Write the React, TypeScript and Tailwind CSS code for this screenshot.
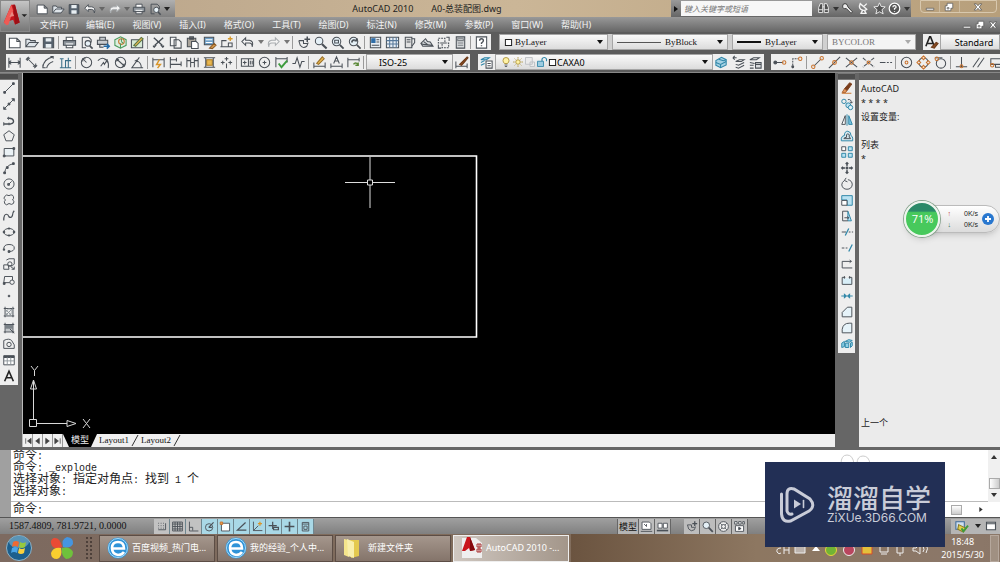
import type { ReactNode } from "react";

const CJK = "font-['Noto_Sans','Noto_Sans_CJK_SC',sans-serif]";
const SERIF = "font-['Liberation_Serif','Noto_Sans_CJK_SC',serif]";

const dk = "#4a5057";
const bl = "#2f86a8";
const or = "#c9722c";

// all drawings live on a 16 x 16 grid
const art: Record<string, ReactNode> = {
    new: <path d="M2.500 3.500h8l3.500 3.500v6.500h-11.500zM10.500 3.500v3.500H14" fill="#fff" />,
    open: <path d="M2 12.500V4.500h4l1 1.500h5v2M2 12.500l3.500-4.500H15l-3.500 4.500z" fill="#dfe5ea" />,
    save: (
        <>
            <path d="M2.500 3h11v10.500h-11z" fill="#56626e" />
            <path d="M5 3.500h6v3.500H5zM5 9.500h6v4H5z" fill="#e8eef2" stroke="none" />
        </>
    ),
    print: (
        <>
            <path d="M4.500 6V2.500h7V6M4.500 10.500v3h7v-3" fill="#fff" />
            <path d="M1.500 6h13v5h-13z" fill="#8d949b" />
            <path d="M4 9.500h8" stroke="#fff" />
        </>
    ),
    preview: (
        <>
            <path d="M3.500 2.500h7l2.500 2.500v3M3.500 2.500v11h4" />
            <circle cx="9.500" cy="9" r="3" fill="#e8f2f8" />
            <path d="M11.500 11.500l3 3" strokeWidth="1.800" />
        </>
    ),
    publish: (
        <>
            <path d="M4 5V2.500h6V5M1.500 5.500h11v4.500h-11zM4 10v3h4" fill="#c8ccd0" />
            <path d="M8 12h6M11.500 9.500L14 12l-2.500 2.500" stroke="#236ba8" strokeWidth="1.800" />
        </>
    ),
    dwf: (
        <>
            <path d="M2 5l6-3 6 3v6l-6 3-6-3z" fill="#dcefe0" stroke="#4b9a5d" />
            <circle cx="9" cy="7" r="3" stroke={or} />
            <path d="M9 7V4M9 7l2 2M8 14V9" stroke="#4b9a5d" />
        </>
    ),
    markup: (
        <>
            <path d="M1.500 5h12v8.500h-12z" fill="#d8ead6" />
            <path d="M4 11l8-8.500 2 1.500-8 8z" fill="#e7b650" stroke="#5b7844" />
        </>
    ),
    cut: <path d="M3 3l9 8M13 3l-9 8M3 13.500l2.500-3M13 13.500l-2.500-3M2 12h3M11 12h3" strokeWidth="1.500" />,
    copy: <path d="M2.500 2.500h6v9h-6zM6.500 5h5l2.500 2.500v6.500h-7.500z" fill="#f5f5f5" />,
    paste: (
        <>
            <path d="M2.500 3.500h9v9h-9zM5 2h4v2.500H5z" fill="#a9a39a" />
            <path d="M7 7h5l2 2v5.500H7z" fill="#fff" />
        </>
    ),
    match: (
        <>
            <path d="M2.500 2.500h10v8h-10z" fill="#6fa0c8" />
            <path d="M4 8h7M4 5h7" stroke="#fff" />
            <path d="M8 14l5-5 2 2-4 3.500z" fill="#d69a4b" stroke="#8b5a25" />
        </>
    ),
    block: (
        <>
            <path d="M3 12V6h5M1.500 12.500h10M10 8.500h4v4h-4z" />
            <path d="M12 1.500v5M9.500 4h5" stroke="#d99a2b" strokeWidth="1.500" />
        </>
    ),
    undo: <path d="M6 3L2 7l4 4V8.500h4q3 0 3 4 2-6-3-7H6z" fill="#f4f4f4" />,
    redo: <path d="M10 3l4 4-4 4V8.500H6q-3 0-3 4-2-6 3-7h4z" fill="#f4f4f4" stroke="#a9adb0" />,
    pan: (
        <>
            <path d="M3 6l1.500 5q3 4 7 1l1.500-4M3 6h5v3h4" />
            <path d="M12 1.500v6M9 4.500h6" strokeWidth="1.600" />
        </>
    ),
    zoom: (
        <>
            <circle cx="6.500" cy="6.500" r="4" fill="#e5f0f6" />
            <path d="M9.500 9.500l5 5" strokeWidth="2.200" />
        </>
    ),
    zoomwin: (
        <>
            <circle cx="7" cy="7" r="4.500" fill="#e5f0f6" />
            <path d="M5 5.500h4v3H5z" />
            <path d="M10.500 10.500l4 4" strokeWidth="2" />
        </>
    ),
    zoomprev: (
        <>
            <circle cx="7" cy="7" r="4.500" fill="#e5f0f6" />
            <path d="M5 8q1-4 5-2M10.500 3.500V6H8M10.500 10.500l4 4" strokeWidth="1.800" />
        </>
    ),
    props: (
        <>
            <path d="M2.500 2.500h11v11h-11z" fill="#e8eef4" />
            <path d="M4 4h3.500v4H4z" fill="#2f6ea8" stroke="#2f6ea8" />
            <path d="M9 5h3M9 7.500h3M4 11h8" />
        </>
    ),
    grid: (
        <>
            <path d="M1.500 2.500h13v11h-13z" fill="#e8eef4" />
            <path d="M5 2.500v11M8.500 2.500v11M12 2.500v11M1.500 6h13M1.500 9.500h13" stroke="#56789a" />
        </>
    ),
    palette: (
        <>
            <path d="M3.500 2.500h7v11h-7z" fill="#e0e0e0" />
            <path d="M10.500 4h3v4l-3 4M5 5h4M5 7.500h4" />
        </>
    ),
    sheets: <path d="M2 9l5-5 2 3 3 .5 3 4.500H4zM2 9l3 1 9 1M5 7l4 3" fill="#d9dcdf" />,
    markset: (
        <>
            <path d="M2.500 3.500h7v5h-7zM6.500 8.500h7v5h-7z" strokeDasharray="2 1" />
            <path d="M11 2.500h3v4M2.500 10v4h3" />
        </>
    ),
    calc: (
        <>
            <path d="M3.500 2h9v12h-9z" fill="#dadcde" />
            <path d="M5 4h6v2H5zM5 8.500h6M5 11h6" stroke="#7a7f84" />
        </>
    ),
    help: (
        <>
            <path d="M2.500 2h11v12h-11z" fill="#fff" />
            <path d="M6 6q0-2 2-2t2 2q0 1-2 2.500v1M8 11v1" strokeWidth="1.500" />
        </>
    ),
    dimlin: <path d="M2 3v10.500M14 3v10.500M2 8h12M4.500 6L2 8l2.500 2M11.500 6L14 8l-2.500 2" />,
    dimali: <path d="M2 5l3-3M11 14l3-3M4 4l8 8M3.500 6.500v-3h3M9.500 12h3V9" />,
    dimarc: <path d="M2 13Q3 4 13 2M6 14q1-5 7-7M2 10v3.500h3M10 1.500h3V4" />,
    dimord: <path d="M2 13.500h12M4 13V4M8 13V6h6M11 13V3M2 4h4" stroke="#3b6f88" />,
    radius: (
        <>
            <circle cx="8" cy="8" r="5.500" />
            <path d="M8 8L4 4M4 7V4h3" />
        </>
    ),
    jog: <path d="M2 6q5-5 10 0 2 3 1 8M5 12l3-4 1 2 3-5M9 5h3v3" />,
    diameter: (
        <>
            <circle cx="8" cy="8" r="5.500" />
            <path d="M3.500 4l9 8M4 7V4.500h2.500M12 9v3H9.500" />
        </>
    ),
    angle: <path d="M14 13.500H2l8-11M7 6q5 2 5 7M5 6.500l2-1 1 2" />,
    quick: (
        <>
            <path d="M2 3v10M14 3v10M2 5h12" />
            <path d="M9 5L6 10h4l-3 4" stroke="#d9962b" strokeWidth="1.600" />
        </>
    ),
    baseline: <path d="M2.500 2v12M2.500 5H9V3M2.500 10H14V7M9 5v2M14 10v2" />,
    cont: <path d="M2 3v10M6 3v10M10 3v10M14 3v10M2 6h4M6 8h4M10 6h4" />,
    space: (
        <>
            <path d="M5 5h6v6H5z" fill="#e7b650" stroke="#a87922" />
            <path d="M2 3h12M2 13h12M4 3v10M12 3v10" />
        </>
    ),
    dbreak: <path d="M8 2v4M8 9v5M2 8h4M10 8h4M4 6v4M12 6v4M6 4h4" />,
    tol: (
        <>
            <path d="M1.500 4h13v8h-13zM9 4v8" />
            <path d="M3 8h4M5 6v4M11 6v4M13 6v4" />
        </>
    ),
    center: (
        <>
            <circle cx="8" cy="8" r="5.500" />
            <path d="M8 6v4M6 8h4" />
        </>
    ),
    inspect: (
        <>
            <path d="M2 2v11M14 2v6M2 4h12" />
            <path d="M5 9l3 4 6-7" stroke="#3d9c3d" strokeWidth="2" />
        </>
    ),
    jogl: <path d="M1.500 9h3l2-6 3 10 2-6h3" />,
    dedit: (
        <>
            <path d="M2 8v6M14 8v6M2 12h12" />
            <path d="M5 9l6-7 2 2-6 6z" fill="#e7b650" stroke="#9a7028" />
        </>
    ),
    dtext: <path d="M2 9v5M14 9v5M2 12h12M5 9l3-7 3 7M6 6.500h4" />,
    dupd: (
        <>
            <path d="M2 3v10M14 3v4M2 5h12" />
            <path d="M8 10q2-3 5 0M13 8v3h-3" stroke="#5c8a3a" strokeWidth="1.500" />
        </>
    ),
    brush: (
        <>
            <path d="M2 7v7M14 9v5M2 12h12" />
            <path d="M6 10l3-3 5-5 1 1-5 6-2 2z" fill="#8b4c22" stroke="#6b3a1a" />
        </>
    ),
    layerprops: (
        <>
            <path d="M2 5l4-2h5L8 5zM2 8l4-2M2 11l4-2" fill="#b8d8e6" stroke={bl} />
            <path d="M7.500 6.500h6.500v7.500H7.500zM9 9h3.500M9 11.500h3.500" fill="#fff" />
        </>
    ),
    layers: (
        <>
            <path d="M2 11l5 2.500 6-3V5L8 2.500 2 6z" fill="#a5d2e4" stroke={bl} />
            <path d="M2 8l5 2 6-3M5 4.500l5 1.500 3-1M7 10v3" stroke={bl} />
        </>
    ),
    layerprev: <path d="M2 3h4M2 3l2-2M2 3l2 2M5 7l4-2h5l-3 2zM5 10l3 1 6-3M5 13l3 1 6-3" />,
    layerst: (
        <>
            <path d="M2 5l4-2h6L9 5zM2 8l5 1M2 11h4M2 14h4" />
            <path d="M8 8h6v6H8zM8 10h6" fill="#dadcde" />
        </>
    ),
    temp: (
        <>
            <path d="M5 8h7" />
            <circle cx="3.500" cy="8" r="1.500" fill={dk} />
            <circle cx="13" cy="8" r="1.800" stroke={or} />
        </>
    ),
    from: (
        <>
            <path d="M4 14V4h6" strokeDasharray="2 1" />
            <circle cx="12" cy="4" r="1.800" stroke={or} />
            <circle cx="4" cy="12.500" r="1" fill={dk} />
        </>
    ),
    endp: (
        <>
            <path d="M4 12l8-8" />
            <circle cx="3.500" cy="12.500" r="1.800" stroke={or} />
            <circle cx="12.500" cy="3.500" r="1.800" stroke={or} />
        </>
    ),
    midp: (
        <>
            <path d="M2 14L14 2" />
            <circle cx="8" cy="8" r="2" stroke={or} />
        </>
    ),
    inter: (
        <>
            <path d="M2 3l12 10M14 3L2 13" />
            <circle cx="8" cy="8" r="1.800" stroke={or} />
        </>
    ),
    appint: (
        <>
            <path d="M2 3l4 3.500M10 9.500l4 3.500M14 3L2 13" strokeDasharray="4 1" />
            <circle cx="8" cy="8" r="1.500" stroke={or} />
        </>
    ),
    ext: <path d="M2 8h6M9.500 8h2M13 8h2" />,
    cen: (
        <>
            <circle cx="8" cy="8" r="5.500" />
            <circle cx="8" cy="8" r="1.500" stroke={or} />
        </>
    ),
    quad: (
        <>
            <circle cx="8" cy="8" r="5" />
            <path d="M8 1l2 2-2 2-2-2zM8 11l2 2-2 2-2-2zM3 6l2 2-2 2-2-2zM13 6l2 2-2 2-2-2z" fill="#f3e3d5" stroke={or} />
        </>
    ),
    tan: (
        <>
            <circle cx="8.500" cy="9" r="5" />
            <path d="M2 3h8" />
            <circle cx="4" cy="4" r="1.800" stroke={or} />
        </>
    ),
    perp: (
        <>
            <path d="M8 2v10M2 12.500h12" />
            <circle cx="8" cy="12" r="1.500" stroke={or} />
        </>
    ),
    par: <path d="M2 13L9 3M7 13l7-10" />,
    insn: (
        <>
            <path d="M3 4h11v6H3zM8 10v3h6" />
            <circle cx="4.500" cy="11" r="1.800" stroke={or} />
        </>
    ),
    line: (
        <>
            <path d="M3 13L13 3" />
            <path d="M2 12h2v2H2zM12 2h2v2h-2z" fill={dk} />
        </>
    ),
    xline: (
        <>
            <path d="M2 14L14 2" />
            <path d="M7 7h2v2H7zM2 11v3h3M11 2h3v3" fill={dk} />
        </>
    ),
    pline: (
        <>
            <path d="M2 12.500h8q4-1 3-4-1-3-6-2.500" strokeWidth="1.600" />
            <path d="M2 10.500v4M8 11v3M8 4.500L6 6l2 1.500" />
        </>
    ),
    polygon: <path d="M8 2l6 4.500-2.500 7h-7L2 6.500z" />,
    rect: (
        <>
            <path d="M2.500 4h11v8.500h-11z" fill="#eaf1f5" />
            <path d="M1.500 11.500h2v2h-2zM12.500 3h2v2h-2z" fill={dk} />
        </>
    ),
    arc: (
        <>
            <path d="M3 13.500Q4 5 13 3" />
            <path d="M2 12.500h2v2H2zM5 6.500h2v2H5zM12 2h2v2h-2z" fill={dk} />
        </>
    ),
    circle: (
        <>
            <circle cx="8" cy="8" r="5.800" />
            <path d="M7 9l4-4M6.500 7.500h2v2h-2z" />
        </>
    ),
    cloud: <path d="M8 3q4-2 5 1 1 2-1 4 3 1 1 4-2 2-5 0-3 3-5 0-1-3 1-4-3-2-1-4 2-3 5-1z" />,
    spline: <path d="M2 13q0-7 3-7 2 0 3 3 3 2 4-2 0-3 2-5" strokeWidth="1.400" />,
    ellipse: (
        <>
            <ellipse cx="8" cy="8" rx="6" ry="4" />
            <path d="M1.500 7h1.500v2H1.500zM13 7h1.500v2H13zM7 3.500h2v1H7zM7 11.500h2v1H7z" fill={dk} />
        </>
    ),
    ellarc: (
        <>
            <path d="M2 9Q2 4 8 4t6 4-6 4" />
            <path d="M1.500 9h1.500v1.500H1.500zM7 11h2v2H7z" fill={dk} />
        </>
    ),
    insert: (
        <>
            <path d="M5 3.500L8 2h6v6l-2 2H8M2 9h5l1 5H2z" fill="#f2f2f2" />
            <circle cx="9" cy="8" r="2.500" />
            <path d="M10 11l4 3M14 11v3h-3" />
        </>
    ),
    mkblock: (
        <>
            <path d="M2 11l1-7h9v7z" fill="#f2f2f2" />
            <circle cx="11.500" cy="10.500" r="2.500" fill="#f2f2f2" />
            <path d="M1.500 11h2v2h-2z" fill={dk} />
        </>
    ),
    point: <circle cx="8" cy="8" r="1" fill={dk} />,
    hatch: (
        <>
            <path d="M2 4h12M2 12.500h12M3.500 2v12M12.500 2v12" />
            <path d="M4 8l4-4M4 12l8-8M8 12l4-4M4 5l7 7M8 4l4 4M4 9l3 3" stroke="#8f969b" />
        </>
    ),
    grad: (
        <>
            <path d="M4 4h8v5H4z" fill="#7b8288" stroke="none" />
            <path d="M4 9h8v3H4z" fill="#c3c7ca" stroke="none" />
            <path d="M2 4h12M2 12.500h12M3.500 2v12M12.500 2v12M9 9l5 5" />
        </>
    ),
    region: (
        <>
            <path d="M2 13V4q6-3 9 0l3 5v4z" />
            <circle cx="8" cy="8.500" r="2.500" />
        </>
    ),
    table: (
        <>
            <path d="M2 3h12v10.500H2z" fill="#fff" />
            <path d="M2 4.500h12" strokeWidth="2.500" />
            <path d="M6 5v8M10 5v8M2 9h12" stroke="#8f969b" />
        </>
    ),
    text: <path d="M3 14L8 2.500 13 14M5 10h6" strokeWidth="1.800" stroke="#222" />,
    erase: (
        <>
            <path d="M5 9l6-7 2.500 1.500L8 11z" fill="#7a3d1c" stroke="#7a3d1c" />
            <path d="M5 9l3 2-2 2.500-3.500-.5z" fill="#e0965c" stroke="#a85f30" />
            <path d="M2 14h11" stroke={or} />
        </>
    ),
    dup: (
        <>
            <circle cx="4.500" cy="5" r="2.500" stroke={bl} />
            <circle cx="9.500" cy="9.500" r="2.800" fill="#bfe3f2" stroke={bl} />
            <circle cx="12" cy="12" r="2.500" fill="#dff1f8" stroke={bl} />
            <path d="M9 3q4-1 4 4M11.500 5.500L13 7l1.500-1.500" />
        </>
    ),
    mirror: (
        <>
            <path d="M6 3v10H2z" fill="#fff" />
            <path d="M10 3v10h4z" fill="#7cc3e0" stroke={bl} />
            <path d="M8 1.500v13" stroke={bl} />
        </>
    ),
    offset: (
        <>
            <path d="M1.500 13.500v-3q1-3 3.500-3 0-5 4-5 4 1 3.500 5 2 1 2 3v3z" fill="#d3e7ef" stroke={bl} />
            <path d="M4.500 11q0-1.500 3-1.500-1-4 1.500-4t1.500 4q1.500 0 1.500 1.500z" />
        </>
    ),
    array: (
        <>
            <path d="M2 2h4.500v4.500H2z" fill="#fff" />
            <path d="M9.500 2H14v4.500H9.500zM2 9.500h4.500V14H2zM9.500 9.500H14V14H9.500z" fill="#b9e2f2" stroke={bl} />
        </>
    ),
    move: <path d="M8 2v4M8 10v4M2 8h4M10 8h4M6.500 3.500L8 2l1.500 1.500M6.500 12.500L8 14l1.500-1.500M3.500 6.500L2 8l1.500 1.500M12.500 6.500L14 8l-1.500 1.500M7.500 7.500h1v1h-1z" strokeWidth="1.600" />,
    rotate: <path d="M5 4q-3 2-3 5 1 5 6 5t6-5q0-5-5-6M7 1L5 4l3.500 1.500" />,
    scale: (
        <>
            <path d="M2 3h12v11H8V8H2z" fill="#b9e2f2" stroke={bl} />
            <path d="M2 8.500h6V14H2z" fill="#fff" />
        </>
    ),
    stretch: (
        <>
            <path d="M9 2.500l4 11H9z" fill="#b9e2f2" stroke={bl} />
            <path d="M9 13.500H3v-11h6M5 10h5M8.500 8.500L10 10l-1.500 1.500" />
        </>
    ),
    trim: (
        <>
            <path d="M2 8h5M10 8h2M13.500 8H15" />
            <path d="M6 12l4-8" stroke={bl} strokeWidth="1.500" />
        </>
    ),
    extend: (
        <>
            <path d="M2 8h3M6.500 8h2" />
            <path d="M10 12l4-8" stroke={bl} strokeWidth="1.500" />
        </>
    ),
    brkpt: <path d="M14 12.500H2.500V5H13M11 3.500L13 5l-2 1.500" />,
    brk: (
        <>
            <path d="M3 6v7h11V6z" fill="#d8eef7" stroke="none" />
            <path d="M2.500 5v8h11V5H10M2.500 5H6M5 3.500v3M11 3.500v3" />
        </>
    ),
    join: <path d="M1.500 8h13M5 5.500L7 8l-2 2.500zM11 5.500L9 8l2 2.500z" fill={bl} stroke={bl} />,
    chamfer: <path d="M2.500 13.500v-5l6-6h5v11z" fill="#e6f3f9" />,
    fillet: <path d="M2.500 13.500v-4q1-7 8-7h3v11z" fill="#e6f3f9" />,
    explode: <path d="M2 7l3-2v6l-3 1zM6 5l4-2 4 1-3 2zM6 7h4v5H6zM12 7l2-1v4l-2 2z" fill="#8fd0e6" stroke={bl} />,
    snap: <path d="M4 4h1M7 4h1M10 4h1M4 7h1M7 7h1M10 7h1M4 10h1M7 10h1M10 10h1M13 4v8H4" />,
    mesh: <path d="M2 2.500h12v11H2zM5 2.500v11M8 2.500v11M11 2.500v11M2 5h12M2 8h12M2 11h12" />,
    ortho: <path d="M3 2v11.500h11M3 9h4v4" />,
    polar: (
        <>
            <circle cx="7.500" cy="9" r="4.500" />
            <path d="M7 9l6-6M7 9h4" strokeWidth="1.500" />
        </>
    ),
    osnap: (
        <>
            <path d="M3 4h10v9.500H3z" fill="#fff" />
            <path d="M1.500 2.500h3v3h-3z" fill="#e5a050" stroke={or} />
        </>
    ),
    otrack: <path d="M13 3L3 12.500h11" strokeWidth="1.500" />,
    ducs: (
        <>
            <path d="M3 2v11h11M3 13l6-6" />
            <path d="M11 2v5M8.500 4.500h5" stroke="#d9962b" strokeWidth="1.600" />
        </>
    ),
    dyn: <path d="M7 2v9M2 7h10M8 9h6v3H8z" strokeWidth="1.500" />,
    lwt: <path d="M8 2v12M2 8h12" strokeWidth="2" />,
    qp: <path d="M4 3h8v10.500H4zM4 5h8M6 7.500h4v4H6z" />,
    sheet: (
        <>
            <path d="M2.500 2.500h9l2 2v7h-11z" fill="#fff" />
            <path d="M5 5l3 3v-3M1 14h14" />
        </>
    ),
    sheet2: (
        <>
            <path d="M2.500 4h5v6h-5zM9 4h5v6H9z" fill="#fff" />
            <path d="M1 13h14" strokeWidth="2" />
        </>
    ),
    wheel: (
        <>
            <circle cx="8" cy="8" r="6" fill="#eee" />
            <circle cx="8" cy="8" r="2.500" />
            <path d="M4 4l2 2M12 4l-2 2M4 12l2-2M12 12l-2-2" />
        </>
    ),
    motion: (
        <>
            <path d="M2 2h3v3H2zM7 2h3v3H7zM12 2h2v3h-2zM3 7h10v7H3z" fill="#fff" />
            <path d="M7 9l3 1.500L7 12z" fill={dk} />
        </>
    ),
    lamp: (
        <>
            <path d="M8 2q-4 0-4 4 0 2 2 4h4q2-2 2-4 0-4-4-4z" fill="#fff3a6" stroke="#a88a2e" />
            <path d="M6 12h4M6.500 14h3" />
        </>
    ),
    sun: (
        <>
            <circle cx="8" cy="8" r="3" fill="#fff3a6" stroke="#a88a2e" />
            <path d="M8 1.500v2M8 12.500v2M1.500 8h2M12.500 8h2M3.500 3.500l1 1M11.500 11.500l1 1M12.500 3.500l-1 1M3.500 12.500l1-1" stroke="#a88a2e" />
        </>
    ),
    vp: <path d="M2 2h9v9H2zM8 8h6v6H8z" stroke="#b9bcc0" fill="#ebebeb" />,
    lock: (
        <>
            <path d="M2 7h8v7H2z" fill="#9ccbe0" stroke={bl} />
            <path d="M8 7V4q1-2 3-2t3 2v3" stroke={bl} strokeWidth="1.500" />
        </>
    ),
    square: <path d="M2.500 2.500h11v11h-11z" fill="#fff" stroke="#222" strokeWidth="1.800" />,
    bino: <path d="M2 13V7l2-5h3v11zM9 13V2h3l2 5v6zM7 6h2M2 9.500h5M9 9.500h5" fill="#4e4e4e" stroke="#eee" />,
    key: <path d="M2 5q0-3 3-3t3.500 4L14 12l-1.500 2-6-6Q2 9 2 5z" fill="#eee" stroke="#333" />,
    dish: <path d="M4 2q-3 6 3 8 3 1 5-1zM8 6l4-4M4 14h8M7 10l-2 4M9 10l2 4" stroke="#f4f4f4" strokeWidth="1.700" />,
    star: <path d="M8 1l2 4.500 5 .5-4 3.500 1.500 5L8 12l-4.500 2.500L5 9.500 1 6l5-.5z" fill="#555" stroke="#f5f5f5" />,
    qhelp: (
        <>
            <circle cx="8" cy="8" r="6.500" fill="#555" stroke="#fff" strokeWidth="1.500" />
            <path d="M6 6.500Q6 4.500 8 4.500t2 1.500q0 1-2 2v1.500M8 11v1" stroke="#fff" strokeWidth="1.500" />
        </>
    ),
    min: <path d="M2 10h12v3H2z" fill="#fff" stroke="#4e4e4e" />,
    max: <path d="M5 2h9v8h-3v4H2V6h3zM5 9h3v2H5z" fill="#fff" stroke="#4e4e4e" />,
    close: <path d="M2 3h3.500L8 6l2.500-3H14l-4 5 4 5h-3.500L8 10l-2.500 3H2l4-5z" fill="#fff" stroke="#4e4e4e" />,
    style: (
        <>
            <path d="M2 12L6 2h1l4 10M4 9h5" strokeWidth="1.700" stroke="#222" />
            <path d="M8 13l5-5 2 1-4 5z" fill="#8b4c22" stroke="#6b3a1a" />
        </>
    ),
    status: (
        <>
            <path d="M2 3h9v8H2z" fill="#cfe0f0" stroke="#3d6a9a" />
            <path d="M5 6l8 4-3 4-6-3z" fill="#e3cd4a" stroke="#8a7a20" />
            <path d="M8 10l2 3 5-6" stroke="#3d9c3d" strokeWidth="2" />
        </>
    ),
    clean: <path d="M2 3h12v10H2zM2 5h12" fill="#fff" strokeWidth="1.500" />,
};

const Icon = ({ name, size = "w-[15px] h-[15px]" }: { name: string; size?: string }) => (
    <svg viewBox="0 0 16 16" className={`${size} shrink-0`} fill="none" stroke={dk} strokeWidth="1.100" aria-hidden="true">
        {art[name]}
    </svg>
);

const Arrow = ({ color = "#222" }: { color?: string }) => (
    <svg viewBox="0 0 6 4" className="h-[4px] w-[6px] shrink-0" aria-hidden="true">
        <path d="M0 0h6L3 4z" fill={color} />
    </svg>
);

// "|" is a divider, "v" is the small drop arrow next to undo and redo
const Tools = ({ items }: { items: string }) => (
    <>
        {items.split(" ").map((name, i) => {
            if (name === "|") {
                return <span key={i} className="mx-px h-[13px] w-[2px] shrink-0 border-l border-[#9a9a9a]" />;
            }
            if (name === "v") {
                return (
                    <button key={i} type="button" aria-label="history" className="flex w-[9px] shrink-0 justify-center">
                        <Arrow color="#777" />
                    </button>
                );
            }
            return (
                <button key={i} type="button" aria-label={name} className="flex w-[17px] shrink-0 justify-center">
                    <Icon name={name} />
                </button>
            );
        })}
    </>
);

const Strip = ({ children, className = "" }: { children: ReactNode; className?: string }) => (
    <div className={`flex h-4 items-center bg-[#eeeeee] ${className}`}>{children}</div>
);

interface ComboProps {
    label: string;
    value: string;
    before?: ReactNode;
    className: string;
    textClass?: string;
    disabled?: boolean;
}

const Combo: React.FC<ComboProps> = ({ label, value, before, className, textClass = "", disabled }) => (
    <div
        className={`relative flex h-4 items-center border border-[#a5a5a5] px-1 ${disabled ? "bg-[#f4f4f4]" : "bg-linear-to-b from-[#fafafa] to-[#dcdcdc]"
            } ${className}`}
    >
        {before}
        <select aria-label={label} disabled={disabled} className={`h-full min-w-0 flex-1 appearance-none bg-transparent leading-none ${textClass}`}>
            <option>{value}</option>
        </select>
        <span className="pointer-events-none absolute right-1">
            <Arrow color={disabled ? "#aaa" : "#111"} />
        </span>
    </div>
);

// half-width characters are drawn smaller than the ideographs around them
const CommandText = ({ text }: { text: string }) => (
    <>
        {text.split(/([\x20-\x7e]+)/).map((part, i) => (
            <span key={i} className={i % 2 ? "text-[10px]" : "text-xs leading-3"}>
                {part}
            </span>
        ))}
    </>
);

const menus = ["文件(F)", "编辑(E)", "视图(V)", "插入(I)", "格式(O)", "工具(T)", "绘图(D)", "标注(N)", "修改(M)", "参数(P)", "窗口(W)", "帮助(H)"];
const drawTools = "line xline pline polygon rect arc circle cloud spline ellipse ellarc insert mkblock point hatch grad region table text".split(" ");
const modifyTools = "erase dup mirror offset array move rotate scale stretch trim extend brkpt brk join chamfer fillet explode".split(" ");
const history = ["命令:", "命令: _explode", "选择对象: 指定对角点: 找到 1 个", "选择对象:"];

const ToolColumn = ({ items }: { items: string[] }) => (
    <div className="flex flex-col bg-[#eeeeee] pb-px">
        <div className="h-[7px] border-y border-[#777] bg-[#4d4d4d]" />
        {items.map((name) => (
            <button key={name} type="button" aria-label={name} className="flex h-4 items-center justify-center">
                <Icon name={name} size="w-[14px] h-[14px]" />
            </button>
        ))}
    </div>
);

const Header = () => (
    <header className="flex h-8 bg-[#666]">
        <button type="button" aria-label="Application menu" className="flex w-[30px] shrink-0 items-center border border-[#888] bg-linear-to-b from-[#c5c5c5] to-[#777]">
            <svg viewBox="0 0 30 30" className="h-[30px] w-[30px]" aria-hidden="true">
                <path d="M3 22L11 3h4l5 19-5 2-2-5-6 2-1 3z" fill="#c5161d" />
                <path d="M3 22L11 3l2 6-5 15-2 1z" fill="#ef5a55" />
                <path d="M13 3h2l5 19-5 2z" fill="#9d1016" />
                <path d="M9 16l3-6 2 5z" fill="#e98a82" />
                <path d="M22 13h6l-3 3z" fill="#222" />
            </svg>
        </button>
        <div className="flex min-w-0 flex-1 flex-col">
            <div className="flex h-[17px] bg-linear-to-r from-[#b9a48a] via-[#cbb697] to-[#b79f7b]">
                <div className="flex w-[145px] shrink-0 items-center justify-around bg-linear-to-b from-[#b0b0b0] to-[#808080] px-1">
                    {["new", "open", "save", "undo", "v", "redo", "v2", "print", "preview"].map((name) =>
                        name.startsWith("v") ? (
                            <Arrow key={name} color="#666" />
                        ) : (
                            <button key={name} type="button" aria-label={name}>
                                <Icon name={name} size="w-[14px] h-[14px]" />
                            </button>
                        )
                    )}
                    <Arrow />
                </div>
                <h1 className={`flex flex-1 items-center justify-center gap-[18px] pl-2 text-[9px] whitespace-nowrap text-[#222] ${CJK}`}>
                    <span>AutoCAD 2010</span>
                    <span>A0-总装配图.dwg</span>
                </h1>
                <div className="ml-auto flex w-[240px] shrink-0 items-center bg-linear-to-b from-[#9a9a9a] to-[#666]">
                    <button type="button" aria-label="Collapse search" className="flex w-[10px] justify-center">
                        <svg viewBox="0 0 4 6" className="h-[6px] w-[4px]" aria-hidden="true">
                            <path d="M0 0v6l4-3z" fill="#111" />
                        </svg>
                    </button>
                    <input
                        type="search"
                        aria-label="Search"
                        placeholder="键入关键字或短语"
                        className={`h-[15px] w-[131px] border-none bg-[#f7f7f7] pl-[3px] text-[8px] italic placeholder:text-[#777] ${CJK}`}
                    />
                    <div className="flex flex-1 items-center justify-around pl-1">
                        {["bino", "v", "key", "dish", "star", "qhelp"].map((name) =>
                            name === "v" ? (
                                <Arrow key={name} color="#333" />
                            ) : (
                                <button key={name} type="button" aria-label={name}>
                                    <Icon name={name} size="w-[13px] h-[13px]" />
                                </button>
                            )
                        )}
                        <Arrow color="#333" />
                    </div>
                </div>
                <div className="mr-[3px] mb-1 ml-[9px] flex w-[77px] shrink-0 rounded-b border border-[#d8c8ae]">
                    {["min", "max", "close"].map((name) => (
                        <button key={name} type="button" aria-label={name} className="flex flex-1 items-center justify-center border-l border-[#cdbb9f] first:border-none last:flex-[2]">
                            <Icon name={name} size="w-[10px] h-[10px]" />
                        </button>
                    ))}
                </div>
            </div>
            <nav className={`flex h-[15px] items-center gap-[18px] bg-linear-to-b from-[#999] to-[#666] pl-[10px] text-[9px] leading-none text-[#f2f2f2] ${CJK}`}>
                {menus.map((menu) => (
                    <button key={menu} type="button" className="whitespace-nowrap">
                        {menu}
                    </button>
                ))}
                <div className="ml-auto flex gap-[3px] pr-[2px]">
                    {["min", "max", "close"].map((name) => (
                        <button key={name} type="button" aria-label={`${name} drawing`}>
                            <Icon name={name} size="w-[10px] h-[10px]" />
                        </button>
                    ))}
                </div>
            </nav>
        </div>
    </header>
);

const Toolbars = () => (
    <div className="overflow-hidden border-b border-[#888] bg-[#5c5c5c]">
        <div className="flex h-5 items-center">
            <Strip className="ml-[6px] shrink-0 pr-px">
                <Tools items="new open save | print preview publish dwf markup | cut copy paste match block | undo v redo v | pan zoom zoomwin zoomprev | props grid palette sheets markset calc | help" />
            </Strip>
            <div className={`ml-2 flex min-w-0 flex-1 gap-1 bg-[#d0d0d0] text-[9px] text-[#111] ${SERIF}`}>
                <Combo label="Color" value="ByLayer" className="flex-[110]" before={<Icon name="square" size="w-[9px] h-[9px] mr-[2px]" />} />
                <Combo label="Linetype" value="ByBlock" className="flex-[118]" before={<span className="mr-1 h-px w-[44px] bg-[#555]" />} />
                <Combo label="Lineweight" value="ByLayer" className="flex-[90]" before={<span className="mr-1 h-[2px] w-[24px] bg-[#111]" />} />
                <Combo label="Plot style" value="BYCOLOR" className="flex-[88]" textClass="text-[#777]" disabled />
            </div>
            <Strip className="ml-[7px] shrink-0">
                <Tools items="style" />
            </Strip>
            <button type="button" className="h-4 w-[60px] shrink-0 border border-[#a5a5a5] bg-linear-to-b from-[#fafafa] to-[#dcdcdc] pl-2 text-[9px] leading-none font-['Noto_Sans',sans-serif]">
                Standard
            </button>
        </div>
        <div className="flex h-5 items-center">
            <Strip className="ml-[6px] shrink-0">
                <Tools items="dimlin dimali dimarc dimord | radius jog diameter angle | quick baseline cont space dbreak | tol center inspect jogl | dedit dtext dupd |" />
                <Combo label="Dimension style" value="ISO-25" className="w-[87px]" textClass="pl-2 text-[9px] font-['Noto_Sans',sans-serif]" />
                <Tools items="brush" />
            </Strip>
            <Strip className="ml-2 min-w-0 flex-1">
                <Tools items="layerprops" />
                <Combo
                    label="Layer"
                    value="CAXA0"
                    className="min-w-0 flex-1"
                    textClass="text-[9px] font-['Noto_Sans',sans-serif]"
                    before={
                        <>
                            {["lamp", "sun", "vp", "lock"].map((name) => (
                                <Icon key={name} name={name} size="w-[12px] h-[12px]" />
                            ))}
                            <Icon name="square" size="w-[9px] h-[9px]" />
                        </>
                    }
                />
                <Tools items="layers layerprev layerst" />
            </Strip>
            <Strip className="ml-[7px] w-[229px] shrink-0 overflow-hidden">
                <Tools items="temp from | endp midp inter appint ext | cen quad tan | perp par insn" />
            </Strip>
        </div>
    </div>
);

const Slash = ({ color = "#333" }: { color?: string }) => (
    <svg viewBox="0 0 8 13" className="h-[13px] w-2" aria-hidden="true">
        <path d="M1 12L7 1" stroke={color} />
    </svg>
);

const LayoutTabs = () => (
    <div className={`flex h-[13px] bg-[#f0f0f0] text-[9px] leading-none text-[#111] ${SERIF}`}>
        {["M3 1v6M9 1L5 4l4 3z", "M7 1L3 4l4 3z", "M3 1l4 3-4 3z", "M2 1l4 3-4 3zM8 1v6"].map((d) => (
            <button key={d} type="button" aria-label="Scroll tabs" className="flex w-[10px] items-center justify-center border-r border-[#999]">
                <svg viewBox="0 0 10 8" className="h-2 w-[10px]" aria-hidden="true">
                    <path d={d} fill="#444" stroke="#444" strokeWidth="0.800" />
                </svg>
            </button>
        ))}
        <button type="button" className="flex items-center text-[#eee]">
            <svg viewBox="0 0 6 13" className="h-[13px] w-[6px]" aria-hidden="true">
                <path d="M0 0l6 13V0z" />
            </svg>
            <span className="flex h-[13px] items-center bg-black pl-[2px]">模型</span>
            <svg viewBox="0 0 8 13" className="h-[13px] w-2" aria-hidden="true">
                <path d="M0 0h8L2 13H0z" />
            </svg>
        </button>
        {["Layout1", "Layout2"].map((tab) => (
            <button key={tab} type="button" className="flex items-center">
                <span className="mx-[2px]">{tab}</span>
                <Slash />
            </button>
        ))}
    </div>
);

const Drawing = () => (
    <div className="flex min-w-0 flex-1 flex-col border-l border-[#bbb]">
        <div className="relative min-h-[360px] flex-1 overflow-hidden bg-black">
            <svg className="absolute inset-0 h-full w-full" fill="none" stroke="#fff" aria-hidden="true">
                <path d="M0 83H453.500V264H0" strokeWidth="1.600" />
                <path d="M322 109.500H344M350 109.500H372M347 84V107M347 112V135M344.500 107h5v5h-5z" stroke="#ddd" />
            </svg>
            <svg viewBox="0 0 76 72" className="absolute bottom-0 left-0 h-[72px] w-[76px]" fill="none" stroke="#d8d8d8" aria-hidden="true">
                <path d="M6.500 57.500h7v7h-7zM10.500 57V19M14 61.500H44M10.500 18l-3 9h6zM53 61.500l-9-3v6zM8 4l3.500 4.500L15 4M11.500 8.500V14M60 57l7 9M67 57l-7 9" />
            </svg>
        </div>
        <LayoutTabs />
    </div>
);

const SpeedWidget = () => (
    <div className="absolute top-[120px] right-0 flex h-[38px] items-center">
        <div className="z-10 flex h-[36px] w-[36px] items-center justify-center rounded-full border-2 border-[#eef5ee] bg-linear-to-b from-[#2b8a68] from-25% to-[#47c95c] to-30% text-[11px] text-white shadow-md ring-1 ring-[#8aa590] font-['Open_Sans',sans-serif]">
            71%
        </div>
        <div className="-ml-3 flex h-[28px] items-center rounded-r-full border border-[#bbb] bg-linear-to-b from-white to-[#dcdcdc] pr-[5px] pl-[18px] text-[7px] leading-[11px] text-[#222] shadow-md font-['Liberation_Sans',sans-serif]">
            <div>
                <p className="flex gap-[13px]">
                    <span className="font-bold text-[#b33]">↑</span>0K/s
                </p>
                <p className="flex gap-[13px]">
                    <span className="font-bold text-[#276b45]">↓</span>0K/s
                </p>
            </div>
            <button type="button" aria-label="Boost" className="ml-1">
                <svg viewBox="0 0 12 12" className="h-3 w-3" aria-hidden="true">
                    <circle cx="6" cy="6" r="6" fill="#2877cf" />
                    <path d="M6 3v6M3 6h6" stroke="#fff" strokeWidth="1.800" />
                </svg>
            </button>
        </div>
    </div>
);

const ScreenMenu = () => (
    <aside className="relative flex w-[141px] shrink-0 flex-col border-t-[7px] border-[#5c5c5c] bg-[#ebebeb]">
        <div className={`flex flex-1 flex-col items-start pt-[2px] pb-[17px] pl-[2px] text-[9px] leading-[14px] text-[#222] ${CJK}`}>
            <button type="button">AutoCAD</button>
            <button type="button">* * * *</button>
            <button type="button" className="mb-[14px]">设置变量:</button>
            <button type="button">列表</button>
            <button type="button">*</button>
            <button type="button" className="mt-auto">上一个</button>
        </div>
        <SpeedWidget />
    </aside>
);

const CommandWindow = () => (
    <section className="relative flex border-t-[3px] border-[#666] bg-white font-['Liberation_Mono','Noto_Sans_CJK_SC',monospace] text-[#222]">
        <div className="w-[11px] shrink-0 bg-[#a0a0a0]" />
        <div className="flex min-w-0 flex-1 flex-col">
            <div className="h-[52px] overflow-hidden border-b border-[#bbb] pl-[2px]">
                {history.map((row, i) => (
                    <p key={i} className="h-3 leading-[11px] whitespace-pre">
                        <CommandText text={row} />
                    </p>
                ))}
            </div>
            <div className="flex h-[15px] items-center pl-[2px] leading-3">
                <label htmlFor="command">
                    <CommandText text="命令:" />
                </label>
                <input id="command" type="text" className="h-3 w-3/5 bg-transparent pl-1 text-[10px] outline-none" />
                <div className="ml-auto flex w-[55px] items-center">
                    <span className="ml-[18px] h-[10px] w-[11px] border border-[#aaa] bg-linear-to-b from-white to-[#ccc]" />
                    <svg viewBox="0 0 4 6" className="ml-[17px] h-[5px] w-[4px]" aria-hidden="true">
                        <path d="M0 0v6l4-3z" fill="#333" />
                    </svg>
                </div>
            </div>
        </div>
        <div className="flex h-[52px] w-[12px] shrink-0 flex-col items-center bg-[#f0f0f0] py-[5px]">
            <span className="flex rotate-180 leading-none">
                <Arrow color="#333" />
            </span>
            <span className="mt-auto mb-1 h-[11px] w-[11px] border border-[#aaa] bg-linear-to-r from-white to-[#ccc]" />
            <Arrow color="#333" />
        </div>
    </section>
);

const StatusBar = () => (
    <footer className="flex h-[17px] items-center border-t border-[#555] bg-linear-to-b from-[#a0a0a0] to-[#808080]">
        <span className={`w-[154px] shrink-0 pl-[9px] text-[10px] leading-none whitespace-nowrap text-[#111] ${SERIF}`}>1587.4809, 781.9721, 0.0000</span>
        {["snap", "mesh", "ortho", "polar", "osnap", "otrack", "ducs", "dyn", "lwt", "qp"].map((name, i) => (
            <button key={name} type="button" aria-label={name} className={`flex h-[15px] w-4 shrink-0 items-center justify-center border-r border-[#6f8790] ${i < 3 ? "bg-[#c2c2c2]" : "bg-[#a9d8e6]"}`}>
                <Icon name={name} size="w-[13px] h-[13px]" />
            </button>
        ))}
        <button type="button" className={`ml-auto h-[15px] border-x border-[#666] bg-[#b5b5b5] px-px text-[9px] leading-none text-[#111] ${CJK}`}>
            模型
        </button>
        {["sheet", "sheet2"].map((name) => (
            <button key={name} type="button" aria-label={name} className="flex h-[15px] w-4 items-center justify-center border-r border-[#666] bg-[#bdbdbd]">
                <Icon name={name} size="w-[13px] h-[13px]" />
            </button>
        ))}
        <div className="ml-[13px] flex">
            {["pan", "zoom", "wheel", "motion"].map((name) => (
                <button key={name} type="button" aria-label={name} className="flex h-[15px] w-4 items-center justify-center border-r border-[#666] bg-[#bdbdbd]">
                    <Icon name={name} size="w-[13px] h-[13px]" />
                </button>
            ))}
        </div>
        <div className="ml-[203px] flex items-center gap-1 bg-[#b5b5b5] pr-[3px]">
            <button type="button" aria-label="Workspace" className="flex w-5 justify-center">
                <Icon name="status" />
            </button>
            <Arrow />
            <button type="button" aria-label="Clean screen">
                <Icon name="clean" size="w-[12px] h-[12px]" />
            </button>
        </div>
    </footer>
);

const Explorer = () => (
    <svg viewBox="0 0 22 22" className="h-[22px] w-[22px] shrink-0" fill="none" aria-hidden="true">
        <circle cx="11" cy="11" r="10.500" fill="#2f93d8" />
        <circle cx="11" cy="11" r="9.500" stroke="#a9dcf7" />
        <path d="M17 15q-2 3-6 3-6-1-6-7t6-6q6 0 6 6.500H5.500" stroke="#fff" strokeWidth="2.600" />
    </svg>
);

const Folder = () => (
    <svg viewBox="0 0 22 22" className="h-[22px] w-[22px] shrink-0" aria-hidden="true">
        <path d="M1 2l5 1v17l-5-2z" fill="#f5e58c" />
        <path d="M7 3h9v16l-8 2z" fill="#e4c94f" />
        <path d="M4 2l7 3v16l-6-2z" fill="#f9efac" />
    </svg>
);

const CadFile = () => (
    <svg viewBox="0 0 22 22" className="h-[22px] w-[22px] shrink-0" fill="none" aria-hidden="true">
        <path d="M1 1h14l6 5v15H1z" fill="#efefef" />
        <path d="M1 14L6 0h3l5 13-5 1-1-3-4 3z" fill="#c9151c" />
        <path d="M9 0l5 13-5 1z" fill="#83090e" />
        <path d="M16 7h4v3h-4zM16 12h4v3h-4zM18 7v8" stroke="#a33" />
    </svg>
);

const tasks = [
    { text: "百度视频_热门电...", icon: <Explorer />, active: false },
    { text: "我的经验_个人中...", icon: <Explorer />, active: false },
    { text: "新建文件夹", icon: <Folder />, active: false },
    { text: "AutoCAD 2010 -...", icon: <CadFile />, active: true },
];

const Taskbar = () => (
    <div className={`flex h-7 items-center bg-linear-to-r from-[#7d6a60] via-[#806c5b] to-[#8b7768] text-white ${CJK}`}>
        <button type="button" aria-label="Start" className="ml-[6px]">
            <svg viewBox="0 0 26 26" className="h-[26px] w-[26px]" aria-hidden="true">
                <circle cx="13" cy="13" r="12.500" fill="#1d5f8d" stroke="#8fb4c8" />
                <ellipse cx="13" cy="7" rx="10" ry="6" fill="#75abc7" opacity="0.700" />
                <path d="M7 7q3-2 6 0l-1 5q-3-2-6 0z" fill="#ee6a33" />
                <path d="M14 7q3 2 6 0l-1 5q-3 2-6 0z" fill="#97c93d" />
                <path d="M6 13q3-2 6 0l-1 5q-3-2-6 0z" fill="#4aa5e8" />
                <path d="M13 13q3 2 6 0l-1 5q-3 2-6 0z" fill="#fbd13c" />
            </svg>
        </button>
        <button type="button" aria-label="Browser" className="ml-[18px]">
            <svg viewBox="0 0 24 24" className="h-6 w-6" aria-hidden="true">
                <path d="M12 11Q5 14 2 10-1 4 4 2q6-1 8 9z" fill="#e94b35" />
                <path d="M13 11Q11 3 17 1q7 1 6 7-3 5-10 3z" fill="#4595e0" />
                <path d="M11 12q2 9-4 11-6 0-6-6 2-6 10-5z" fill="#f9cf2f" />
                <path d="M12 12q8-2 11 4 0 7-7 7-5-3-4-11z" fill="#6fc13c" />
            </svg>
        </button>
        <span className="mr-[7px] ml-3 h-[22px] w-[6px] border-x-2 border-dotted border-[#4d403a]" />
        {tasks.map((task) => (
            <button
                key={task.text}
                type="button"
                className={`mr-[2px] flex h-[27px] w-[116px] shrink-0 items-center gap-[3px] border pl-[7px] text-[9px] whitespace-nowrap ${task.active
                        ? "border-[#eee] bg-linear-to-r from-[#cfc7c0] to-[#a3968a]"
                        : "border-[#5c4d45] bg-linear-to-b from-[#a5978d] to-[#84746a]"
                    }`}
            >
                {task.icon}
                {task.text}
            </button>
        ))}
        <div className="flex flex-1 items-end justify-end self-stretch bg-linear-to-r from-[#6b5440] via-[#8d7761] to-[#8b7768] pr-[7px] pb-[6px]">
            <svg viewBox="0 0 160 14" className="h-[14px] w-[160px]" fill="none" stroke="#eee" aria-hidden="true">
                <path d="M7 6q-5 0-4 4 2 3 4 1M10 5v7M15 5v7M10 8h5" />
                <path d="M21 4h10v7H21z" fill="#bdb4ae" />
                <path d="M38 9l4-5 4 5z" fill="#fff" stroke="none" />
                <circle cx="57" cy="8" r="5.500" fill="#72b335" stroke="#e9d43b" />
                <circle cx="75" cy="8" r="5.500" fill="#b9455e" stroke="#eee" />
                <path d="M88 4h10v8H88z" fill="#e4c03b" stroke="#d64c2a" />
                <path d="M106 4h8v6h-8zM107 12h6" />
                <path d="M123 4v7h6V4M126 11v3" />
                <path d="M139 6h3l4-4v10l-4-3h-3zM149 4q2 4 0 6M152 2q3 5 0 9" />
            </svg>
        </div>
        <time className="shrink-0 bg-[#8b7768] text-center text-[9px] leading-[13px]">
            18:48
            <br />
            2015/5/30
        </time>
        <button type="button" aria-label="Show desktop" className="mr-px ml-[6px] h-[27px] w-[9px] border border-[#b5a79c] bg-[#a09082]" />
    </div>
);

const Badge = () => (
    <div className="absolute right-[55px] bottom-[15px] flex h-[85px] w-[180px] items-center bg-[#222f55] pl-[14px] text-[#c9ccd8]">
        <svg viewBox="0 0 36 38" className="h-[38px] w-9 shrink-0" fill="none" stroke="#c9ccd8" strokeWidth="3" strokeLinecap="round" aria-hidden="true">
            <path d="M2.500 8V28q1 9 9 7L30 25q7-5 1-12L15 3Q8 1 8 8V25q1 4 5 3" />
            <path d="M15 13.500v9l7-4.500z" fill="#c9ccd8" stroke="none" />
            <path d="M24.500 14.500v7" strokeWidth="1.600" />
        </svg>
        <div className="ml-3 flex flex-col pb-1">
            <span className="text-[26px] leading-[30px] font-medium whitespace-nowrap font-['Noto_Sans_CJK_SC',sans-serif]">溜溜自学</span>
            <span className="text-xs leading-3 whitespace-nowrap font-['Inter',sans-serif]">ZiXUe.3D66.COM</span>
        </div>
    </div>
);

export default function App() {
    return (
        <div className="relative flex min-h-screen flex-col overflow-hidden bg-[#666]">
            <Header />
            <Toolbars />
            <main className="flex flex-1">
                <div className="w-[22px] shrink-0 pr-1">
                    <ToolColumn items={drawTools} />
                </div>
                <Drawing />
                <div className="w-6 shrink-0 pr-1 pl-[3px]">
                    <ToolColumn items={modifyTools} />
                </div>
                <ScreenMenu />
            </main>
            <CommandWindow />
            <svg viewBox="0 0 30 10" className="absolute right-[130px] bottom-[98px] h-[10px] w-[30px]" fill="none" stroke="#ccc" aria-hidden="true">
                <path d="M1 10q0-9 6-9t7 9M17 10q0-8 6-8t7 8" />
            </svg>
            <StatusBar />
            <Taskbar />
            <Badge />
        </div>
    );
}
